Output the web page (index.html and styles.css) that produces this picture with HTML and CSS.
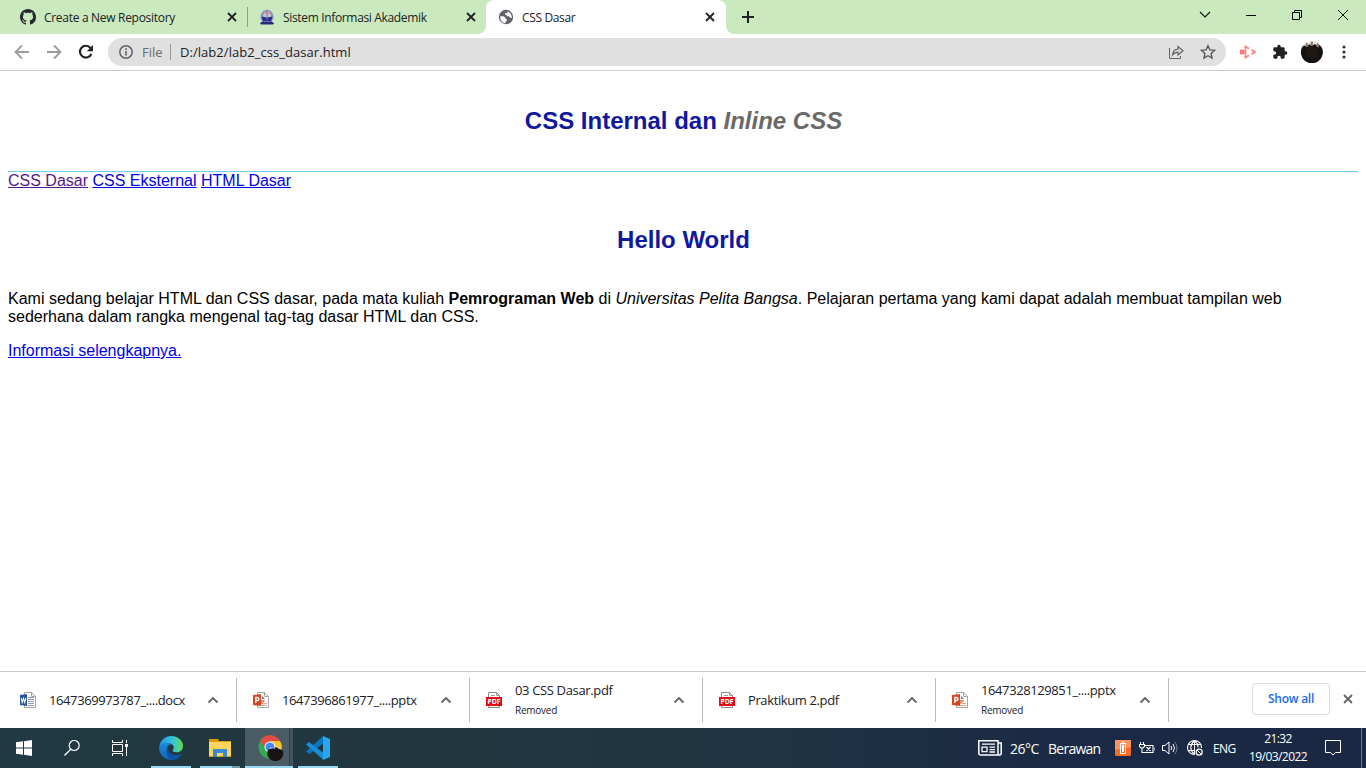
FILE: index.html
```html
<!DOCTYPE html>
<html lang="id">
<head>
<meta charset="utf-8">
<title>CSS Dasar</title>
<link rel="stylesheet" href="styles.css">
</head>
<body>
<svg class="defs" width="0" height="0">
  <symbol id="close" viewBox="0 0 10 10"><path d="M1 1l8 8M9 1L1 9" fill="none" stroke="currentColor" stroke-width="1.8"/></symbol>
  <symbol id="up" viewBox="0 0 12 8"><path d="M1.500 6.500L6 2l4.500 4.500" fill="none" stroke="#666" stroke-width="1.900"/></symbol>
  <symbol id="ppt" viewBox="0 0 16 16">
    <path d="M4.500.5h7l4 4v11h-11z" fill="#fff" stroke="#a5a5a5"/><path d="M11.500.5v4h4" fill="none" stroke="#a5a5a5"/>
    <path d="M8 4a4 3.500 0 1 0 4 4H8z" fill="#dc8d77"/><path d="M9 4v3h3z" fill="#777"/>
    <path d="M7 11.500h7M7 13.500h7" stroke="#e8a58f"/><path d="M0 3l8-1v12l-8-1z" fill="#d24726"/>
    <path d="M2.800 11V5.500h1.700a1.400 1.400 0 0 1 0 3H2.800" fill="none" stroke="#fff" stroke-width="1.300"/>
  </symbol>
</svg>

<div class="tabs">
  <div class="tab tab-first">
    <svg class="favicon" viewBox="0 0 16 16"><path fill="#24292e" d="M8 0C3.580 0 0 3.580 0 8c0 3.540 2.290 6.530 5.470 7.590.4.070.55-.17.55-.38 0-.19-.01-.82-.01-1.490-2.010.37-2.530-.49-2.690-.94-.09-.23-.48-.94-.82-1.130-.28-.15-.68-.52-.01-.53.63-.01 1.080.58 1.230.82.72 1.210 1.870.87 2.330.66.07-.52.28-.87.51-1.070-1.780-.2-3.640-.89-3.640-3.950 0-.87.31-1.590.82-2.150-.08-.2-.36-1.020.08-2.120 0 0 .67-.21 2.200.82.64-.18 1.320-.27 2-.27s1.360.09 2 .27c1.530-1.040 2.200-.82 2.200-.82.44 1.100.16 1.920.08 2.120.51.56.82 1.270.82 2.150 0 3.070-1.870 3.750-3.650 3.950.29.25.54.73.54 1.480 0 1.070-.01 1.930-.01 2.200 0 .21.15.46.55.38A8.010 8.010 0 0 0 16 8c0-4.420-3.580-8-8-8z"/></svg>
    <span class="tab-title t1">Create a New Repository</span>
    <svg class="x"><use href="#close"/></svg>
  </div>
  <div class="tab tab-second">
    <svg class="favicon" viewBox="0 0 16 16"><path d="M1.500 10V6L4 2l4-1.500L12 2l2.500 4v4l-2 2h-9z" fill="#8b96bd"/><path d="M4 10V6l2-3h4l2 3v4z" fill="#c9c4cf"/><path d="M7 2.500h2l1 2.500H6z" fill="#dd8375"/><path d="M2.500 7.500L8 8.500l5.500-1-1.500 5H4z" fill="#2a2c89"/><path d="M1 14.500l2-2h10l2 2-1 1H2z" fill="#272a76"/><path d="M8 5v6M5 12.500h6" stroke="#667bc5"/></svg>
    <span class="tab-title t2">Sistem Informasi Akademik</span>
    <svg class="x"><use href="#close"/></svg>
  </div>
  <div class="tab tab-active">
    <svg class="favicon" viewBox="0 0 16 16"><circle cx="8" cy="8" r="7.200" fill="#5f6368"/><path d="M2.300 7.300h3.200l2 1.400v1.500H9v1.500l-1.500 1v1.500C4 13.800 1.800 11 2.300 7.300zM9.500 2.500l-.3 1.700H7v1.600h1.700v1.500H11l1.300 1.400 1.500.2C14 5.500 12 3 9.500 2.500z" fill="#fff"/></svg>
    <span class="tab-title t3">CSS Dasar</span>
    <svg class="x"><use href="#close"/></svg>
  </div>
  <svg class="plus" viewBox="0 0 12 12"><path d="M6 0v12M0 6h12" stroke="#202124" stroke-width="2"/></svg>
  <div class="window-buttons">
    <svg viewBox="0 0 12 12"><path d="M1 3l5 5 5-5" fill="none" stroke="#111" stroke-width="1.100"/></svg>
    <svg viewBox="0 0 12 12"><path d="M1 6.500h10" stroke="#000"/></svg>
    <svg viewBox="0 0 12 12"><path d="M1.500 3.500h7v7h-7zM3.500 3V1.500h7v7H9" fill="none" stroke="#000"/></svg>
    <svg viewBox="0 0 12 12"><path d="M1 1l10 10M11 1L1 11" stroke="#111"/></svg>
  </div>
</div>

<div class="toolbar">
  <svg class="nav-icon" viewBox="0 0 16 16"><path d="M15 8H2M8 1.500L1.500 8 8 14.500" fill="none" stroke="#9b9c9e" stroke-width="1.800"/></svg>
  <svg class="nav-icon" viewBox="0 0 16 16"><path d="M1 8h13M8 1.500L14.500 8 8 14.500" fill="none" stroke="#9b9c9e" stroke-width="1.800"/></svg>
  <svg class="nav-icon" viewBox="0 0 16 16"><path d="M13.300 10A5.900 5.900 0 1 1 12.500 4" fill="none" stroke="#202124" stroke-width="2.200"/><path d="M15 1v6.200H8.800z" fill="#202124"/></svg>
  <div class="address">
    <svg class="info" viewBox="0 0 14 14"><circle cx="7" cy="7" r="6.200" fill="none" stroke="#5f6368" stroke-width="1.500"/><path d="M7 6v4.500M7 3.300v1.600" stroke="#5f6368" stroke-width="1.600"/></svg>
    <span class="scheme">File</span><span class="path">D:/lab2/lab2_css_dasar.html</span>
    <svg class="share" viewBox="0 0 16 16"><path d="M1.500 4v10.500h11V12" fill="none" stroke="#5f6368"/><path d="M4.500 11C5 7 7 5.200 10 5.200V2.500l5 4.300-5 4.200V8.200C7.500 8.200 6 9 4.500 11z" fill="none" stroke="#5f6368" stroke-width="1.200"/></svg>
    <svg class="star" viewBox="0 0 16 16"><path d="M8 1.700l1.900 4.200 4.600.5-3.400 3.100.9 4.500-4-2.300L4 14l.9-4.500-3.400-3.100 4.600-.5z" fill="none" stroke="#55585d" stroke-width="1.400"/></svg>
  </div>
  <svg class="ext" viewBox="0 0 16 16"><path d="M0 5.500h4.500v5H0z" fill="#ff7b7b"/><path d="M5.500 5V2.500L9 4.500M11.500 5.800L15 8l-3.500 2.200M9 11.500l-3.500 2V11M5.500 5.500v5" fill="none" stroke="#ff8080" stroke-width="1.800"/></svg>
  <svg class="puzzle" viewBox="0 0 24 24"><path fill="#202124" d="M20.500 11H19V7a2 2 0 0 0-2-2h-4V3.500a2.500 2.500 0 0 0-5 0V5H4a2 2 0 0 0-2 2v3.800h1.500a2.700 2.700 0 0 1 0 5.400H2V20a2 2 0 0 0 2 2h3.800v-1.500a2.700 2.700 0 0 1 5.400 0V22H17a2 2 0 0 0 2-2v-4h1.500a2.500 2.500 0 0 0 0-5z"/></svg>
  <svg class="avatar" viewBox="0 0 22 22"><path d="M1.500 5.500l2-1.500 2 1L9 3l2 1.500L14 3l2.500 2 2-1 2 2A11 11 0 1 1 1.500 5.500z" fill="#151211"/><path d="M4.500 6V2.500l2-1 1 4zM9.500 5V.5h2.500V5zM15 5.500l1-4 2.500 2-1 3z" fill="#8d7b70"/><path d="M2.500 4.500l2-2 .5 2zM7 2.500L9.500 1v3zM13 3.500l.5-3L15.500 1z" fill="#d8d2cc"/><path d="M5 7q5-3 12 0l-1 9H6z" fill="#211815"/></svg>
  <svg class="dots" viewBox="0 0 4 14"><circle cx="2" cy="2" r="1.600"/><circle cx="2" cy="7" r="1.600"/><circle cx="2" cy="12" r="1.600"/></svg>
</div>

<main class="page">
  <header class="page-header"><h1>CSS Internal dan <i>Inline CSS</i></h1></header>
  <nav><a class="visited" href="#">CSS Dasar</a> <a href="#">CSS Eksternal</a> <a href="#">HTML Dasar</a></nav>
  <section class="intro"><h1>Hello World</h1></section>
  <p>Kami sedang belajar HTML dan CSS dasar, pada mata kuliah <b>Pemrograman Web</b> di <i>Universitas Pelita Bangsa</i>. Pelajaran pertama yang kami dapat adalah membuat tampilan web sederhana dalam rangka mengenal tag-tag dasar HTML dan CSS.</p>
  <p class="more"><a href="#">Informasi selengkapnya.</a></p>
</main>

<div class="downloads">
  <div class="download">
    <svg class="file" viewBox="0 0 16 16"><path d="M4.500.5h7l4 4v11h-11z" fill="#fff" stroke="#a5a5a5"/><path d="M11.500.5v4h4" fill="none" stroke="#a5a5a5"/><path d="M8 5.500h6M8 7.500h6M8 9.500h6M8 11.500h6M8 13.500h6" stroke="#8d9aad"/><path d="M0 3l7-1v12l-7-1z" fill="#2b579a"/><path d="M1.200 6l1 4.500L3.500 6.500l1.300 4L5.800 6" fill="none" stroke="#fff" stroke-width="1.100"/></svg>
    <div class="file-text"><div class="name n1">1647369973787_....docx</div></div><svg class="up"><use href="#up"/></svg>
  </div>
  <div class="download"><svg class="file"><use href="#ppt"/></svg><div class="file-text"><div class="name n2">1647396861977_....pptx</div></div><svg class="up"><use href="#up"/></svg></div>
  <div class="download">
    <svg class="file" viewBox="0 0 16 16"><path d="M2.500 5V.5h8l3 3V5M2.500 14v1.500h11V14" fill="#fff" stroke="#888"/><path d="M10.500.5v3h3M5 3.500h4" fill="none" stroke="#999"/><path d="M0 5h16v9H0z" fill="#e10b17"/><text x="8" y="12.300" text-anchor="middle" class="pdf-label" textLength="13" lengthAdjust="spacingAndGlyphs">PDF</text></svg>
    <div class="file-text"><div class="name n3">03 CSS Dasar.pdf</div><div class="removed">Removed</div></div><svg class="up"><use href="#up"/></svg>
  </div>
  <div class="download">
    <svg class="file" viewBox="0 0 16 16"><path d="M2.500 5V.5h8l3 3V5M2.500 14v1.500h11V14" fill="#fff" stroke="#888"/><path d="M10.500.5v3h3M5 3.500h4" fill="none" stroke="#999"/><path d="M0 5h16v9H0z" fill="#e10b17"/><text x="8" y="12.300" text-anchor="middle" class="pdf-label" textLength="13" lengthAdjust="spacingAndGlyphs">PDF</text></svg>
    <div class="file-text"><div class="name n4">Praktikum 2.pdf</div></div><svg class="up"><use href="#up"/></svg>
  </div>
  <div class="download"><svg class="file"><use href="#ppt"/></svg><div class="file-text"><div class="name n2">1647328129851_....pptx</div><div class="removed">Removed</div></div><svg class="up"><use href="#up"/></svg></div>
  <div class="show-all">Show all</div>
  <svg class="dismiss"><use href="#close"/></svg>
</div>

<div class="taskbar">
  <div class="task"><svg width="16" height="16" viewBox="0 0 16 16"><path d="M0 2.300L7 1.300V7.500H0zM8 1.200L16 0v7.500H8zM0 8.500h7v6.200l-7-1zM8 8.500h8V16l-8-1.200z" fill="#fff"/></svg></div>
  <div class="task"><svg width="16" height="16" viewBox="0 0 16 16"><circle cx="10.200" cy="5.500" r="5" fill="none" stroke="#fff" stroke-width="1.200"/><path d="M6.700 9.200L.5 15.500" stroke="#fff" stroke-width="1.300"/></svg></div>
  <div class="task"><svg width="16" height="16" viewBox="0 0 16 16"><path d="M.5 0v2.500h10V0M.5 16v-2.500h10V16M.5 4.500h10v7H.5zM14.500 0v3M14.500 7v9" fill="none" stroke="#fff"/><path d="M13 4h3v3h-3z" fill="#fff"/></svg></div>
  <div class="task app edge"><svg width="24" height="24" viewBox="0 0 24 24">
    <defs><linearGradient id="eg" x1="0" x2="1"><stop offset="0" stop-color="#2294df"/><stop offset=".55" stop-color="#35c2dd"/><stop offset="1" stop-color="#65db4e"/></linearGradient><linearGradient id="eb" x2="0" y2="1"><stop stop-color="#168edc"/><stop offset="1" stop-color="#1164bb"/></linearGradient></defs>
    <path d="M.2 11C1 4.500 6 0 12 0c7 0 12 4.500 12 10 0 4-3 6.300-6.300 6.300-3 0-4.500-1-4-2 1.800-2 1.300-5-1.700-6.500C8 6 3 7.500.2 11z" fill="url(#eg)"/><path d="M.1 11C3 6 9.500 5.500 12.500 8.500 9 8 7.500 11 8 14c.7 5 6.500 8 14.500 4-3 5-8 6.800-13 5.600C3 22 0 17 .1 11z" fill="url(#eb)"/><path d="M8.700 10.500c-3 4-1.500 11 4.300 13.400 4 0 7.500-2.400 9.500-5.900C16 21 8.500 19 8.700 10.500z" fill="#0d55a9"/></svg></div>
  <div class="task app explorer"><svg width="22" height="18" viewBox="0 0 22 18"><path d="M0 0h9l1 2h12v16H0z" fill="#dc9b09"/><path d="M0 3h22v14H0z" fill="#ffd45f"/><path d="M4 10h14v8h-4v-4H8v4H4z" fill="#3989d5"/></svg></div>
  <div class="task app chrome"><svg width="26" height="26" viewBox="0 0 26 26"><circle cx="12" cy="12" r="11.500" fill="#34a853"/><path d="M2 6a11.500 11.500 0 0 1 20 0H12L8 13z" fill="#e44c42"/><path d="M12 6h10a11.500 11.500 0 0 1-10 17.500L17 13z" fill="#fbc52c"/><circle cx="12" cy="12" r="5.500" fill="#fff"/><circle cx="12" cy="12" r="4.500" fill="#4285f4"/><path d="M10 15l3-2 2 1 2-2 3 1 2 1 3 2a8 8 0 1 1-15-1z" fill="#171413"/><path d="M11 14l2-2 1 1.500zM15.500 13.500l1-2.500 1 2.500zM20 13.500l1-2 1.500 3z" fill="#d0c7c0"/></svg></div>
  <div class="task app code"><svg width="24" height="24" viewBox="0 0 24 24"><path d="M17 0v7.500L3.500 18 0 15.500z" fill="#0877bd"/><path d="M0 8.500L3 6l14.500 11v7z" fill="#168fd7"/><path d="M17 0l7 3v18l-7 3z" fill="#2aa6f1"/></svg></div>
  <div class="tray">
    <svg class="news" viewBox="0 0 24 16"><path d="M20 3h3.200v10.500q0 1.500-1.500 1.500H3Q.8 15 .8 13V.8H20V13q0 2 1.500 2" fill="none" stroke="#fff" stroke-width="1.500"/><path d="M4 4.200h13M11.500 7.200H17M11.500 9.700H17M11.500 12H17M4 7.200h5v4.500H4z" fill="none" stroke="#fff" stroke-width="1.300"/></svg>
    <span class="temp">26°C</span><span class="weather">Berawan</span>
    <svg class="cell" viewBox="0 0 16 16"><rect width="16" height="16" rx="1.500" fill="#f46c23"/><path d="M0 0h16v7L0 10z" fill="#fa9360"/><path d="M5.500 3.500h5v10h-5zM7 2h2" fill="none" stroke="#fff"/><path d="M7 5h2v7H7z" fill="#fff"/></svg>
    <svg class="battery" viewBox="0 0 16 12"><path d="M.5 2.500h5v2L4 6H2L.5 4.500zM1.500 0v2M4.500 0v2M3 6v4.500h3M6 3.500h8v7H5.500M7.500 5l4 4M11.500 5l-4 4" fill="none" stroke="#fff" stroke-width="1.100"/><path d="M15.500 5.500v3" stroke="#8d9aa5"/></svg>
    <svg class="volume" viewBox="0 0 16 14"><path d="M.5 4.500h2.500L7 1v12L3 9.500H.5z" fill="none" stroke="#fff"/><path d="M9 5q1.500 2 0 4M11 3q3 4 0 8" fill="none" stroke="#fff"/><path d="M13 1q4 6 0 12" fill="none" stroke="#71808b"/></svg>
    <svg class="globe" viewBox="0 0 16 16"><path d="M8 14.500A7 7 0 1 1 14.500 8M7.500.5Q0 7.500 7.500 14.500M7.500.5q4 3.500 3.500 7M1 4.500h13M1 10.500h7M7.500 0v14" fill="none" stroke="#fff" stroke-width="1.100"/><circle cx="12.200" cy="12.200" r="3" fill="#1c2d43" stroke="#fff" stroke-width="1.200"/><path d="M10 10l4.300 4.300" stroke="#fff"/></svg>
    <span class="lang">ENG</span>
    <div class="clock"><span class="time">21:32</span><span class="date">19/03/2022</span></div>
    <svg class="notice" viewBox="0 0 16 16"><path d="M.5.5h15v12h-5L8 15l-2.500-2.500h-5z" fill="none" stroke="#fff"/></svg>
  </div>
</div>
</body>
</html>
```
FILE: styles.css
```css
* { box-sizing: border-box; }
body { margin: 0; width: 1366px; height: 768px; overflow: hidden; display: flex; flex-direction: column; background: #fff; color: #202124; font: 12px "Open Sans", sans-serif; }
svg { display: block; flex: none; }
.defs { position: absolute; }
.tabs { height: 34px; flex: none; display: flex; align-items: center; background: #cbe9be; }
.tab { height: 34px; display: flex; align-items: center; flex: none; }
.tab-first { width: 248px; padding: 0 11px 0 20px; background: linear-gradient(#8ca184, #8ca184) 247px 7px / 1px 20px no-repeat; }
.tab-second { width: 238px; padding: 0 10px 0 11px; }
.tab-active { width: 240px; padding: 0 11px 0 12px; background: #fff; border-radius: 8px 8px 0 0; position: relative; }
.tab-active::before, .tab-active::after { content: ""; position: absolute; bottom: 0; width: 8px; height: 8px; }
.tab-active::before { left: -8px; background: radial-gradient(circle at 0 0, transparent 7.5px, #fff 8px); }
.tab-active::after { right: -8px; background: radial-gradient(circle at 100% 0, transparent 7.5px, #fff 8px); }
.favicon { width: 16px; height: 16px; margin-right: 8px; }
.tab-title { flex: 1; white-space: nowrap; }
.t1 { letter-spacing: -0.3px; }
.t2 { letter-spacing: -0.34px; }
.t3 { letter-spacing: -0.35px; }
.x { width: 10px; height: 10px; }
.plus { width: 12px; height: 12px; margin-left: 16px; }
.window-buttons { display: flex; gap: 34px; margin: 0 17px 5px auto; }
.window-buttons svg { width: 12px; height: 12px; }

.toolbar { height: 37px; flex: none; display: flex; align-items: center; border-bottom: 1px solid #ccc; padding-left: 14px; }
.nav-icon { width: 16px; height: 16px; margin-right: 16px; }
.nav-icon:nth-child(3) { margin-right: 14px; }
.address { width: 1118px; height: 28px; border-radius: 14px; background: #e0e0e0; display: flex; align-items: center; padding: 0 10px 0 11px; font-size: 13px; }
.info { width: 14px; height: 14px; margin-right: 9px; }
.scheme { color: #6b6d70; width: 29px; height: 16px; line-height: 16px; border-right: 1px solid #999; }
.path { margin-left: 9px; letter-spacing: 0.05px; }
.share { width: 16px; height: 16px; margin-left: auto; margin-right: 16px; }
.star { width: 16px; height: 16px; }
.ext { width: 16px; height: 16px; margin-left: 14px; }
.puzzle { width: 16px; height: 16px; margin-left: 16px; }
.avatar { width: 22px; height: 22px; margin-left: 13px; }
.dots { width: 4px; height: 14px; margin-left: 19px; fill: #303236; }

.page { height: 600px; flex: none; padding: 0 8px; color: #000; font: 16px/18px "Liberation Sans", Arial, sans-serif; }
.page-header { height: 101px; border-bottom: 1px solid #77ccef; }
.page-header, .intro { display: flex; align-items: center; justify-content: center; padding: 0 0 2px 1px; }
.intro { height: 100px; }
h1 { margin: 0; color: #0f189f; font-size: 24px; line-height: 27px; }
h1 i { color: #696969; }
nav { height: 18px; }
a { color: #00e; text-decoration: underline; }
.visited { color: #551a8b; }
p { margin: 0; }
.more { margin-top: 16px; }

.downloads { height: 57px; flex: none; border-top: 1px solid #ccc; padding-left: 4px; display: flex; align-items: center; }
.download { width: 233px; height: 44px; flex: none; display: flex; align-items: center; padding: 0 17px 0 16px; border-right: 1px solid #bbb; }
.file { width: 16px; height: 16px; margin-right: 13px; margin-top: -1px; }
.file-text { flex: 1; white-space: nowrap; }
.name { font-size: 13px; line-height: 18px; }
.n1, .n2 { letter-spacing: -0.4px; }
.n3 { letter-spacing: -0.35px; }
.n4 { letter-spacing: -0.38px; }
.removed { font-size: 10px; line-height: 14px; margin-top: 4px; letter-spacing: -0.4px; }
.file-text:has(.removed) { margin-top: -3px; }
.removed { letter-spacing: -0.25px; }
.up { width: 12px; height: 8px; }
.pdf-label { font: bold 7px "Open Sans", sans-serif; fill: #fff; }
.show-all { width: 78px; height: 32px; margin: -2px 13px 0 83px; border: 1px solid #dadce0; border-radius: 4px; color: #1a6be8; font-weight: 600; line-height: 30px; text-align: center; letter-spacing: -0.25px; flex: none; }
.dismiss { width: 10px; height: 10px; color: #5f6368; margin-top: -2px; }

.taskbar { height: 40px; flex: none; display: flex; color: #fff; background: linear-gradient(90deg, #213942, #21373f 32%, #203443 55%, #1a2945 80%, #1b2844); }
.task { width: 48px; height: 40px; display: flex; align-items: center; justify-content: center; flex: none; }
.app { width: 40px; border-bottom: 2px solid #99d9f3; padding-top: 2px; }
.edge { margin-left: 7px; }
.explorer { margin-left: 9px; border-image: linear-gradient(90deg, #99d9f3 31px, #719dab 31px) 2; border-width: 0 0 2px; border-style: solid; }
.chrome { margin-left: 5px; width: 48px; padding-left: 3px; background: linear-gradient(90deg, #4b5d64 44px, #29404a 44px 45px, #43535b 45px); }
.code { margin-left: 5px; }
.tray { margin: 0 4px 0 auto; width: 384px; display: flex; align-items: center; border-right: 1px solid #66758a; }
.news { width: 24px; height: 16px; margin-right: 8px; }
.temp { width: 38px; font-size: 14px; letter-spacing: -0.5px; flex: none; }
.weather { width: 67px; font-size: 14px; letter-spacing: -0.75px; flex: none; }
.cell { width: 16px; height: 16px; }
.battery { width: 16px; height: 12px; margin-left: 8px; }
.volume { width: 16px; height: 14px; margin-left: 7px; }
.globe { width: 16px; height: 16px; margin-left: 9px; }
.lang { width: 36px; margin-left: 10px; letter-spacing: -0.55px; flex: none; }
.clock { width: 58px; display: flex; flex-direction: column; align-items: center; line-height: 18px; flex: none; margin-top: -1px; }
.time { letter-spacing: -0.6px; }
.date { letter-spacing: -0.55px; }
.notice { width: 16px; height: 16px; margin-left: 18px; }
```
